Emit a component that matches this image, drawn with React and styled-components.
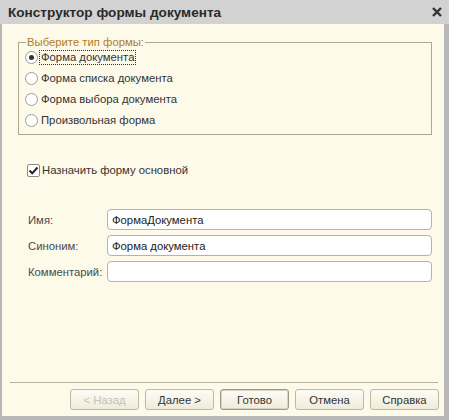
import React from "react";
import styled, { createGlobalStyle } from "styled-components";

const Global = createGlobalStyle`
  html, body { margin: 0; padding: 0; background: #fdfaea; }
  body { font-family: "Liberation Sans", Arial, sans-serif; font-size: 11px; color: #333; }
  * { box-sizing: border-box; }
`;

const Window = styled.div`
  width: 449px;
  height: 420px;
  display: flex;
  flex-direction: column;
  background: #fdfaea;
  border-left: 2px solid #b8b8b8;
  border-right: 5px solid #b8b8b8;
  border-bottom: 4px solid #b8b8b8;
`;

const TitleBar = styled.div`
  height: 24px;
  flex: none;
  display: flex;
  align-items: center;
  justify-content: space-between;
  background: #d2d2d2;
  font-weight: bold;
  font-size: 13.6px;
  color: #2a2a2a;
  margin-left: -2px;
  margin-right: -5px;
  padding-left: 8px;
  padding-right: 6px;
`;

const Close = styled.svg`
  width: 12px;
  height: 12px;
`;

const Body = styled.div`
  flex: 1;
  display: flex;
  flex-direction: column;
  padding: 12px 11px 0 16px;
`;

const Group = styled.fieldset`
  margin: 0;
  border: 1px solid #aca98e;
  padding: 0 0 0 6px;
  height: 99px;
  display: flex;
  flex-direction: column;
  margin-right: 1px;
`;

const Legend = styled.legend`
  color: #b07c26;
  padding: 0 1px;
  margin-left: 1px;
  font-size: 11.3px;
  line-height: 12px;
`;

const RadioRow = styled.div`
  height: 21px;
  display: flex;
  align-items: center;
  gap: 1px;
  margin-top: ${(p) => (p.$first ? "-1px" : "0")};
`;

const RadioCircle = styled.span`
  width: 13px;
  height: 13px;
  border-radius: 50%;
  border: 1px solid #9c9c9c;
  background: #fff;
  display: flex;
  align-items: center;
  justify-content: center;
  &::after {
    content: "";
    width: 5px;
    height: 5px;
    border-radius: 50%;
    background: ${(p) => (p.$checked ? "#333" : "transparent")};
  }
`;

const RadioText = styled.span`
  padding: 0 1px;
  border: 1px dotted ${(p) => (p.$focus ? "#333" : "transparent")};
  line-height: 13px;
  font-size: 11.3px;
`;

const CheckRow = styled.div`
  margin-top: 27px;
  margin-left: 9px;
  display: flex;
  align-items: center;
  gap: 2px;
  height: 16px;
  font-size: 11.3px;
`;

const CheckBox = styled.span`
  width: 13px;
  height: 13px;
  border: 1px solid #8a8a8a;
  border-radius: 2px;
  background: #fff;
  display: flex;
  align-items: center;
  justify-content: center;
`;

const Fields = styled.div`
  margin-top: 31px;
  display: grid;
  grid-template-columns: 79px 1fr;
  row-gap: 5px;
  align-items: center;
  padding-left: 10px;
  margin-right: 1px;
`;

const Label = styled.span`
  color: #4a4a4a;
  font-size: 11.3px;
`;

const Input = styled.div`
  height: 21px;
  border: 1px solid #b4b4a8;
  border-radius: 4px;
  background: #fff;
  padding: 0 4px;
  display: flex;
  align-items: center;
  color: #222;
  font-size: 11.3px;
`;

const Spacer = styled.div`
  flex: 1;
`;

const Separator = styled.div`
  height: 1px;
  background: #b8b5a0;
  margin: 0 -5px 0 -8px;
`;

const Buttons = styled.div`
  display: flex;
  justify-content: flex-end;
  gap: 6px;
  padding: 6px 0 6px 0;
  margin-right: -6px;
`;

const Button = styled.button`
  width: ${(p) => p.$w || 69}px;
  height: 21px;
  font-family: "Liberation Sans", Arial, sans-serif;
  font-size: 11.3px;
  border-radius: 3px;
  border: 1px solid ${(p) => (p.$default ? "#9a9888" : "#bcb9a8")};
  background: linear-gradient(#fdfcf4, #efecdc);
  color: ${(p) => (p.$disabled ? "#c4c2b4" : "#333")};
  padding: 0;
  box-shadow: ${(p) => (p.$default ? "inset 0 0 0 1px #d8d5c4" : "none")};
`;

export default function App() {
  return (
    <>
      <Global />
      <Window>
        <TitleBar>
          <span>Конструктор формы документа</span>
          <Close viewBox="0 0 12 12">
            <path d="M2 2L10 10M10 2L2 10" stroke="#333" strokeWidth="2.4" />
          </Close>
        </TitleBar>
        <Body>
          <Group>
            <Legend>Выберите тип формы:</Legend>
            <RadioRow $first>
              <RadioCircle $checked />
              <RadioText $focus>Форма документа</RadioText>
            </RadioRow>
            <RadioRow>
              <RadioCircle />
              <RadioText>Форма списка документа</RadioText>
            </RadioRow>
            <RadioRow>
              <RadioCircle />
              <RadioText>Форма выбора документа</RadioText>
            </RadioRow>
            <RadioRow>
              <RadioCircle />
              <RadioText>Произвольная форма</RadioText>
            </RadioRow>
          </Group>
          <CheckRow>
            <CheckBox>
              <svg width="11" height="11" viewBox="0 0 11 11">
                <path d="M1.5 5.5L4.2 8.3L9.5 2.5" fill="none" stroke="#222" strokeWidth="2" />
              </svg>
            </CheckBox>
            <span>Назначить форму основной</span>
          </CheckRow>
          <Fields>
            <Label>Имя:</Label>
            <Input>ФормаДокумента</Input>
            <Label>Синоним:</Label>
            <Input>Форма документа</Input>
            <Label>Комментарий:</Label>
            <Input />
          </Fields>
          <Spacer />
          <Separator />
          <Buttons>
            <Button $disabled>&lt; Назад</Button>
            <Button>Далее &gt;</Button>
            <Button $default>Готово</Button>
            <Button>Отмена</Button>
            <Button>Справка</Button>
          </Buttons>
        </Body>
      </Window>
    </>
  );
}
